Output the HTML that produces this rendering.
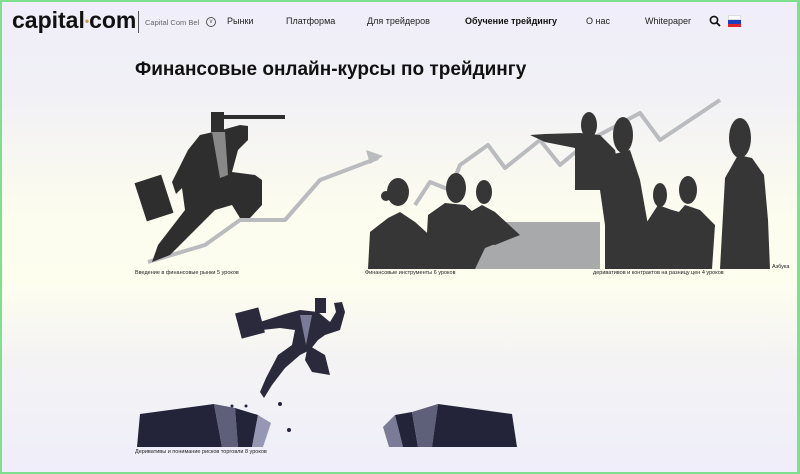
<!DOCTYPE html>
<html><head><meta charset="utf-8"><style>
html,body{margin:0;padding:0}
body{width:800px;height:474px;position:relative;overflow:hidden;font-family:"Liberation Sans",sans-serif;
background:linear-gradient(#efeefa 0px,#f1f0f6 90px,#fbfbef 200px,#fefeef 280px,#f4f3f4 360px,#efeefa 474px);}
.frame{position:absolute;left:0;top:0;width:800px;height:474px;box-sizing:border-box;border:2px solid #7ee08f;border-right-width:3px;pointer-events:none}
.t{position:absolute;white-space:nowrap}
.nav{font-size:9px;color:#222;top:16px}
.cap{font-size:5.5px;color:#222}
</style></head><body>
<div class="t" style="left:12px;top:7px;font-size:23px;font-weight:bold;letter-spacing:0px;color:#111">capital<span style="color:#c79a5a;font-size:12px;vertical-align:3px;margin:0 0px">•</span>com</div>
<div style="position:absolute;left:138px;top:11px;width:1px;height:22px;background:#555"></div>
<div class="t" style="left:145px;top:18px;font-size:7.5px;color:#666">Capital Com Bel</div>
<div style="position:absolute;left:206px;top:17px;width:8px;height:8px;border:1px solid #555;border-radius:50%;font-size:6px;line-height:8px;text-align:center;color:#555">v</div>
<div class="t nav" style="left:227px">Рынки</div>
<div class="t nav" style="left:286px">Платформа</div>
<div class="t nav" style="left:367px">Для трейдеров</div>
<div class="t nav" style="left:465px;font-weight:bold;color:#111">Обучение трейдингу</div>
<div class="t nav" style="left:586px">О нас</div>
<div class="t nav" style="left:645px">Whitepaper</div>
<svg style="position:absolute;left:709px;top:15px" width="12" height="12"><circle cx="5" cy="5" r="3.6" fill="none" stroke="#111" stroke-width="1.6"/><line x1="7.6" y1="7.6" x2="11" y2="11" stroke="#111" stroke-width="1.8"/></svg>
<div style="position:absolute;left:728px;top:15px;width:13px;height:10px"><div style="height:3.3px;background:#fff;border:0.3px solid #ddd"></div><div style="height:3.3px;background:#1c3fc0"></div><div style="height:3.4px;background:#e0242a"></div></div>
<div class="t" style="left:135px;top:59px;font-size:19px;font-weight:bold;color:#111">Финансовые онлайн-курсы по трейдингу</div>

<svg style="position:absolute;left:0;top:0" width="800" height="474">
<g fill="none" stroke="#b9bbbe" stroke-width="4" stroke-linejoin="round">
<polyline points="148,262 205,245 240,220 285,220 320,180 378,158"/>
<polyline points="415,205 430,182 450,190 460,165 488,145 505,168 540,140 560,165 590,140 640,113 660,140 690,120 720,100"/>
</g>
<polygon points="383,156 366,150 370,164" fill="#b9bbbe"/>
<g fill="#2e2e2e">
<rect x="211" y="112" width="13" height="20"/>
<rect x="224" y="115" width="61" height="4"/>
<path d="M200,135 L222,130 L240,125 L248,126 L248,140 L238,150 L232,172 L255,175 L262,180 L262,205 L250,218 L240,218 L232,205 L215,210 L170,255 L152,262 L158,245 L185,210 L182,188 L176,194 L172,182 L188,150 Z"/>
<rect x="140" y="178" width="28" height="40" transform="rotate(-18 154 198)"/>
</g>
<path d="M212,132 L225,132 L228,175 L220,178 Z" fill="#888"/>
<rect x="470" y="222" width="130" height="47" fill="#a7a9aa"/>
<g fill="#363636">
<ellipse cx="398" cy="192" rx="11" ry="14"/>
<circle cx="386" cy="196" r="5"/>
<path d="M368,269 L370,232 L388,218 L400,212 L415,222 L435,240 L445,269 Z"/>
<ellipse cx="456" cy="188" rx="10" ry="15"/>
<path d="M425,269 L428,215 L445,203 L465,205 L480,218 L505,240 L485,248 L475,269 Z"/>
<ellipse cx="484" cy="192" rx="8" ry="12"/>
<path d="M470,240 L470,212 L482,205 L495,212 L520,235 L495,245 Z"/>
<ellipse cx="589" cy="125" rx="8" ry="13"/>
<path d="M575,190 L575,148 L545,142 L530,135 L545,134 L580,133 L600,135 L615,150 L620,175 L622,225 L605,225 L600,190 Z"/>
<ellipse cx="623" cy="135" rx="10" ry="18"/>
<path d="M605,269 L605,195 L610,155 L630,150 L640,180 L648,225 L665,240 L650,248 L650,269 Z"/>
<ellipse cx="660" cy="195" rx="7" ry="12"/>
<ellipse cx="688" cy="190" rx="9" ry="14"/>
<path d="M640,269 L645,225 L658,205 L672,210 L690,215 L700,245 L690,269 Z"/>
<path d="M668,269 L672,220 L685,205 L700,210 L715,225 L712,269 Z"/>
<ellipse cx="740" cy="138" rx="11" ry="20"/>
<path d="M720,269 L725,178 L738,155 L752,158 L764,175 L768,220 L770,269 Z"/>
</g>
<g fill="#2b2a3c">
<rect x="238" y="310" width="24" height="26" transform="rotate(-15 250 323)"/>
<path d="M260,322 L285,314 L300,310 L318,312 L330,322 L336,312 L334,303 L342,302 L345,312 L340,330 L325,335 L318,340 L310,350 L300,355 L285,368 L272,385 L264,398 L260,392 L266,378 L278,355 L292,345 L295,330 L280,328 L262,330 Z"/>
<rect x="315" y="298" width="11" height="15"/>
<path d="M308,345 L325,355 L330,375 L312,372 L305,360 Z"/>
</g>
<path d="M300,315 L312,315 L306,345 Z" fill="#7a7c97"/>
<g>
<polygon points="137,447 140,414 214,404 222,447" fill="#23243a"/>
<polygon points="214,404 235,408 238,447 222,447" fill="#5e6079"/>
<polygon points="235,408 258,415 252,447 238,447" fill="#23243a"/>
<polygon points="258,415 271,423 263,447 252,447" fill="#9597b3"/>
<polygon points="383,427 395,415 403,447 389,447" fill="#7a7c97"/>
<polygon points="395,415 412,412 418,447 403,447" fill="#23243a"/>
<polygon points="412,412 438,404 432,447 418,447" fill="#5e6079"/>
<polygon points="438,404 512,414 517,447 432,447" fill="#23243a"/>
<circle cx="232" cy="406" r="1.5" fill="#23243a"/><circle cx="246" cy="406" r="1.5" fill="#23243a"/><circle cx="280" cy="404" r="2" fill="#23243a"/><circle cx="289" cy="430" r="2" fill="#23243a"/>
</g>
</svg>

<div class="t cap" style="left:135px;top:270px">Введение в финансовые рынки 5 уроков</div>
<div class="t cap" style="left:365px;top:270px">Финансовые инструменты 6 уроков</div>
<div class="t cap" style="left:593px;top:270px">деривативов и контрактов на разницу цен 4 уроков</div>
<div class="t cap" style="left:772px;top:264px">Азбука</div>
<div class="t cap" style="left:135px;top:449px">Деривативы и понимание рисков торговли 8 уроков</div>
<div class="frame"></div>
</body></html>
